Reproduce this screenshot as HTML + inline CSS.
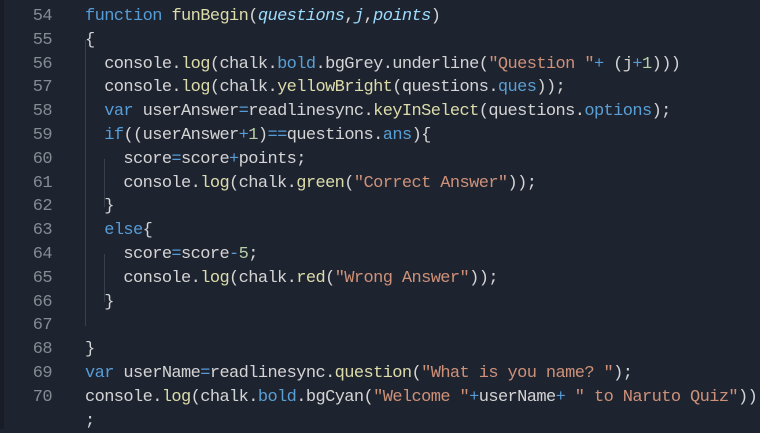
<!DOCTYPE html>
<html><head><meta charset="utf-8"><style>
html,body{margin:0;padding:0;width:760px;height:429px;overflow:hidden;background:#1e2330;}
.ln{position:absolute;left:0;width:52px;text-align:right;color:#858a93;font:17px/23.8px "Liberation Mono",monospace;letter-spacing:-0.6px;}
.code{position:absolute;left:85px;white-space:pre;color:#d4d4d4;font:17px/23.8px "Liberation Mono",monospace;letter-spacing:-0.6px;}
.k{color:#569cd6}.f{color:#dcdcaa}.s{color:#ce9178}.p{color:#9cdcfe;font-style:italic}.b{color:#5a9fd4}.n{color:#b5cea8}.o{color:#569cd6}
.g{position:absolute;width:1px;background:#3a3f4b;}
.strip{position:absolute;left:0;top:0;width:4px;height:429px;background:#181c26;}
</style></head><body>
<div class="strip"></div>
<div class="g" style="left:85px;top:40px;height:286px"></div>
<div class="g" style="left:104px;top:159px;height:48px"></div>
<div class="g" style="left:104px;top:254px;height:48px"></div>
<div class="ln" style="top:5px">54<br>55<br>56<br>57<br>58<br>59<br>60<br>61<br>62<br>63<br>64<br>65<br>66<br>67<br>68<br>69<br>70</div>
<div class="code" style="top:5px"><span class="k">function</span> <span class="f">funBegin</span>(<span class="p">questions</span>,<span class="p">j</span>,<span class="p">points</span>)
{
  console.<span class="f">log</span>(chalk.<span class="b">bold</span>.bgGrey.underline(<span class="s">"Question "</span><span class="o">+</span> (j<span class="o">+</span><span class="n">1</span>)))
  console.<span class="f">log</span>(chalk.<span class="f">yellowBright</span>(questions.<span class="b">ques</span>));
  <span class="k">var</span> userAnswer<span class="o">=</span>readlinesync.<span class="f">keyInSelect</span>(questions.<span class="b">options</span>);
  <span class="k">if</span>((userAnswer<span class="o">+</span><span class="n">1</span>)<span class="o">==</span>questions.<span class="b">ans</span>){
    score<span class="o">=</span>score<span class="o">+</span>points;
    console.<span class="f">log</span>(chalk.<span class="f">green</span>(<span class="s">"Correct Answer"</span>));
  }
  <span class="k">else</span>{
    score<span class="o">=</span>score<span class="o">-</span><span class="n">5</span>;
    console.<span class="f">log</span>(chalk.<span class="f">red</span>(<span class="s">"Wrong Answer"</span>));
  }

}
<span class="k">var</span> userName<span class="o">=</span>readlinesync.<span class="f">question</span>(<span class="s">"What is you name? "</span>);
console.<span class="f">log</span>(chalk.<span class="b">bold</span>.bgCyan(<span class="s">"Welcome "</span><span class="o">+</span>userName<span class="o">+</span> <span class="s">" to Naruto Quiz"</span>))
;</div>
</body></html>
